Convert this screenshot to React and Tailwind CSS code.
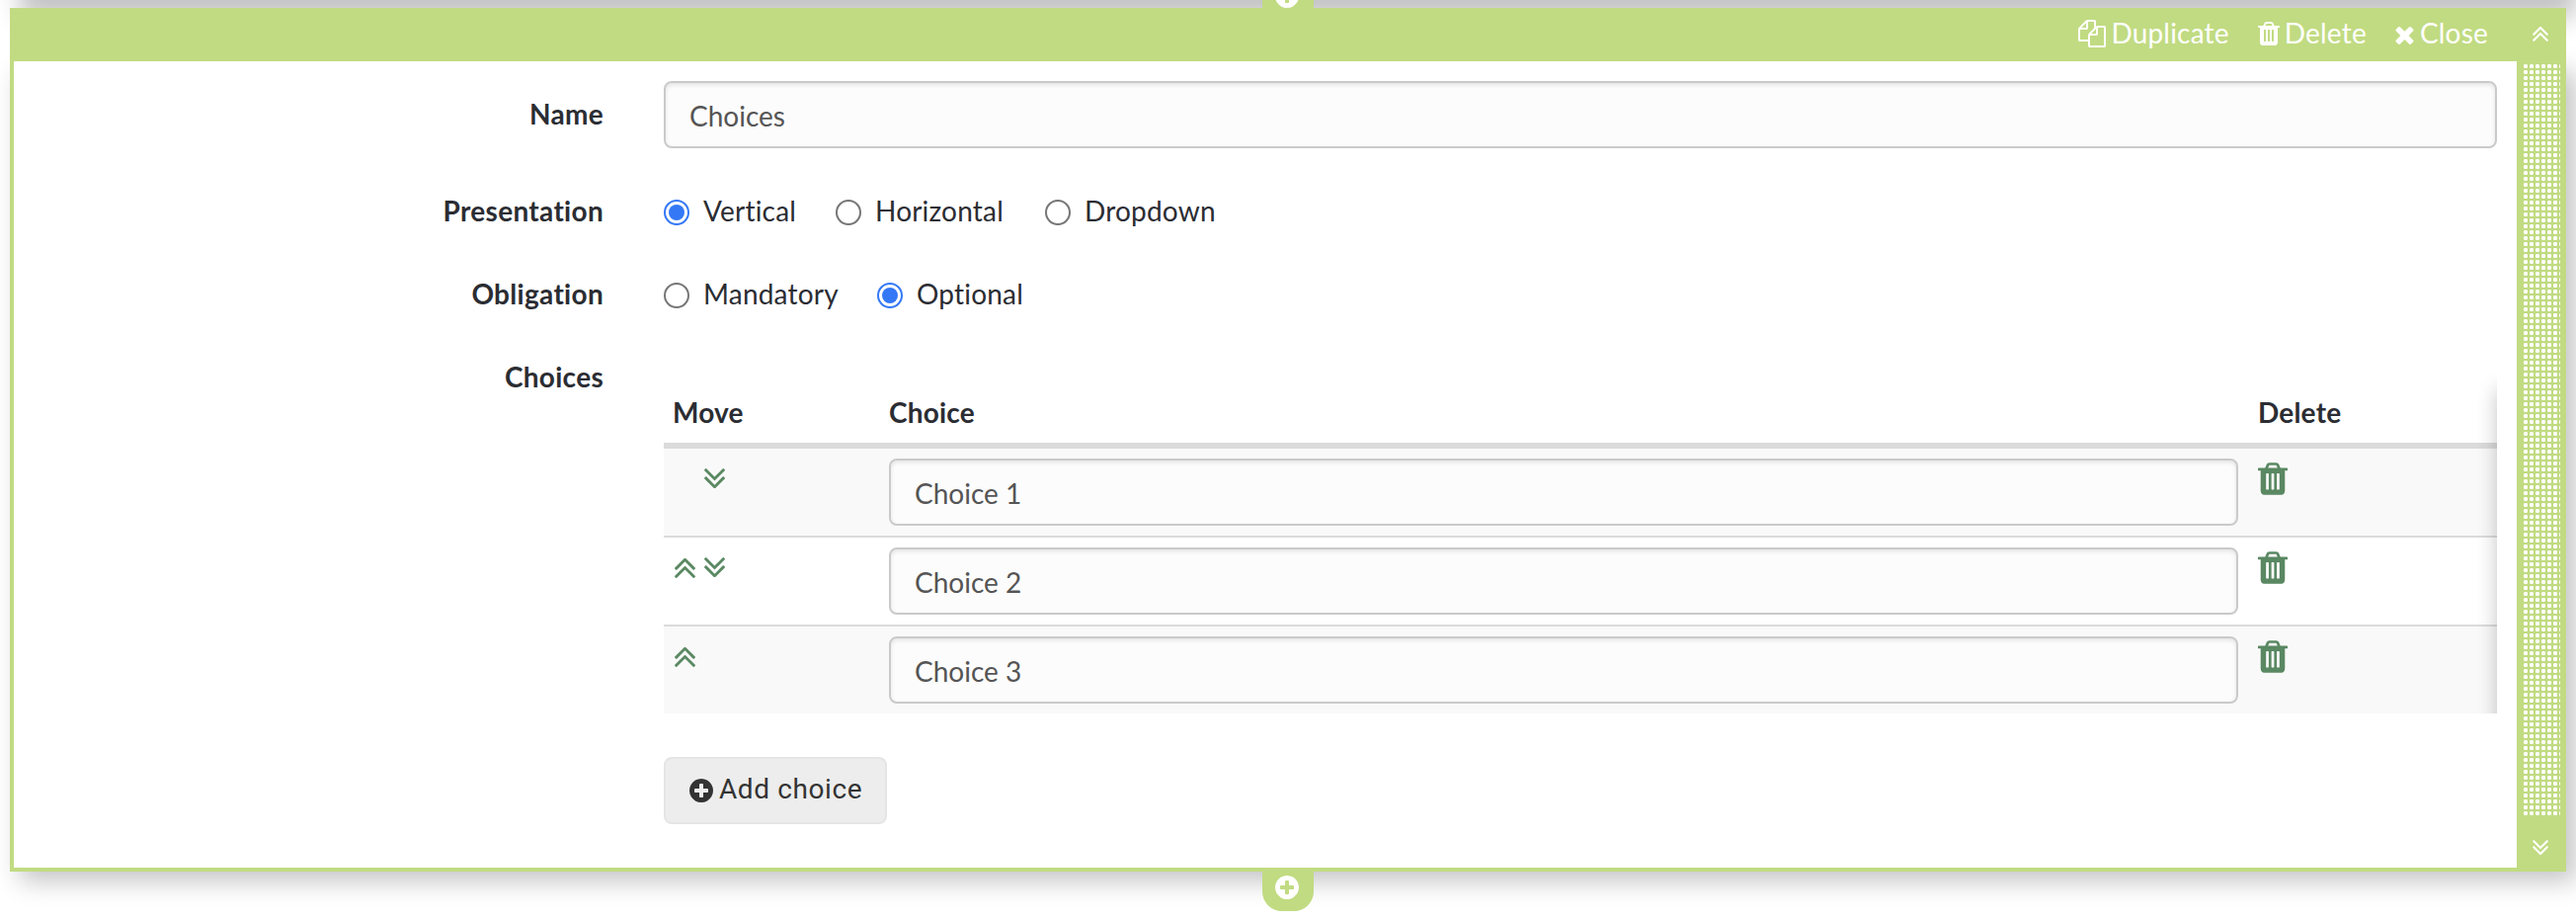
const P = {
  trash: ['0 128 1408 1536', 'M512 1376v-704q0-14-9-23t-23-9h-64q-14 0-23 9t-9 23v704q0 14 9 23t23 9h64q14 0 23-9t9-23zm256 0v-704q0-14-9-23t-23-9h-64q-14 0-23 9t-9 23v704q0 14 9 23t23 9h64q14 0 23-9t9-23zm256 0v-704q0-14-9-23t-23-9h-64q-14 0-23 9t-9 23v704q0 14 9 23t23 9h64q14 0 23-9t9-23zm-544-992h448l-48-117q-7-9-17-11h-317q-10 2-17 11zm928 32v64q0 14-9 23t-23 9h-96v948q0 83-47 143.5t-113 60.5h-832q-66 0-113-58.5t-47-141.5v-952h-96q-14 0-23-9t-9-23v-64q0-14 9-23t23-9h309l70-167q15-37 54-63t79-26h320q40 0 79 26t54 63l70 167h309q14 0 23 9t9 23z'],
  files: ['0 0 1792 1792', 'M1696 384q40 0 68 28t28 68v1216q0 40-28 68t-68 28h-960q-40 0-68-28t-28-68v-288h-544q-40 0-68-28t-28-68v-672q0-40 20-88t48-76l408-408q28-28 76-48t88-20h416q40 0 68 28t28 68v328q68-40 128-40h416zm-544 213l-299 299h299v-299zm-640-384l-299 299h299v-299zm196 647l316-316v-416h-384v416q0 40-28 68t-68 28h-416v640h512v-256q0-40 20-88t48-76zm956 804v-1152h-384v416q0 40-28 68t-68 28h-416v640h896z'],
  times: ['302 302 1188 1252', 'M1490 1322q0 40-28 68l-136 136q-28 28-68 28t-68-28l-294-294-294 294q-28 28-68 28t-68-28l-136-136q-28-28-28-68t28-68l294-294-294-294q-28-28-28-68t28-68l136-136q28-28 68-28t68 28l294 294 294-294q28-28 68-28t68 28l136 136q28 28 28 68t-28 68l-294 294 294 294q28 28 28 68z'],
  plus: ['128 128 1536 1536', 'M1344 960v-128q0-26-19-45t-45-19h-256v-256q0-26-19-45t-45-19h-128q-26 0-45 19t-19 45v256h-256q-26 0-45 19t-19 45v128q0 26 19 45t45 19h256v256q0 26 19 45t45 19h128q26 0 45-19t19-45v-256h256q26 0 45-19t19-45zm320-64q0 209-103 385.5t-279.5 279.5-385.5 103-385.5-103-279.5-279.5-103-385.5 103-385.5 279.5-279.5 385.5-103 385.5 103 279.5 279.5 103 385.5z'],
  up: ['397 452 998 943', 'M1395 1312q0 13-10 23l-50 50q-10 10-23 10t-23-10l-393-393-393 393q-10 10-23 10t-23-10l-50-50q-10-10-10-23t10-23l466-466q10-10 23-10t23 10l466 466q10 10 10 23zm0-384q0 13-10 23l-50 50q-10 10-23 10t-23-10l-393-393-393 393q-10 10-23 10t-23-10l-50-50q-10-10-10-23t10-23l466-466q10-10 23-10t23 10l466 466q10 10 10 23z'],
};

function Icon({ name, className }) {
  const [box, d] = P[name];
  return (
    <svg viewBox={box} className={`shrink-0 fill-current ${className}`} aria-hidden="true">
      <path d={d} />
    </svg>
  );
}

function Field({ label, top, children }) {
  return (
    <div className={`flex ${top}`}>
      <div className="w-[598px] shrink-0 pr-px text-right font-bold leading-[38px] tracking-[0.3px]">{label}</div>
      <div className="ml-[60px] w-[1856px]">{children}</div>
    </div>
  );
}

function TextBox({ value }) {
  return (
    <input
      readOnly
      value={value}
      className="block h-[68px] w-full rounded-[8px] border-2 border-[#cacaca] bg-[#fcfcfc] px-6 pt-px text-[28px] tracking-normal text-[#555] shadow-[inset_0_2px_4px_rgba(10,10,10,0.1)] outline-none"
    />
  );
}

function Radio({ label, checked, width }) {
  return (
    <label className={`flex items-start ${width}`}>
      <span
        className={`mt-2 flex size-[26px] shrink-0 items-center justify-center rounded-full border-2 bg-white ${checked ? 'border-[#3478f6]' : 'border-[#767676]'}`}
      >
        {checked && <span className="size-4 rounded-full bg-[#3478f6]" />}
      </span>
      <span className="ml-[14px] leading-[38px]">{label}</span>
    </label>
  );
}

function ChoiceRow({ value, up, down, className }) {
  return (
    <div className={`flex ${className}`}>
      <div className="flex w-[228px] gap-[9px] pl-[11px] pt-5 text-[#5a8862]">
        <Icon name="up" className={`h-5 w-[21px] mt-px ${up ? '' : 'invisible'}`} />
        <Icon name="up" className={`h-5 w-[21px] rotate-180 ${down ? '' : 'invisible'}`} />
      </div>
      <div className="w-[1366px] pt-[10px]">
        <TextBox value={value} />
      </div>
      <div className="pl-5 pt-[14px] text-[#5a8862]">
        <Icon name="trash" className="h-[33px] w-[30px]" />
      </div>
    </div>
  );
}

export default function App() {
  return (
    <div className="relative h-[932px] w-[2608px] overflow-hidden bg-white font-['Lato',sans-serif] text-[28px] tracking-[0.2px] text-[#2b2d33]">
      <div className="absolute -top-[60px] left-[10px] h-[56px] w-[2588px] shadow-[10px_22px_24px_rgba(0,0,0,0.24)]" />
      <div className="absolute left-[1278px] top-0 z-10 h-2 w-[52px] overflow-hidden bg-[#c1db82]">
        <div className="-mt-4 flex justify-center pr-0.5 text-white">
          <Icon name="plus" className="size-6" />
        </div>
      </div>

      <div className="relative ml-[10px] mt-2 flex h-[874px] w-[2588px] flex-col">
        <div className="relative flex h-[54px] shrink-0 items-start bg-[#c1db82] leading-[42px] text-white">
          <div className="flex flex-1 items-start justify-end pr-[29px] pt-1 tracking-[0.2px]">
            <Icon name="files" className="mt-2 size-[28px]" />
            <span className="ml-[5px]">Duplicate</span>
            <Icon name="trash" className="ml-[29px] mt-[10px] h-6 w-[22px]" />
            <span className="ml-[5px]">Delete</span>
            <Icon name="times" className="ml-[29px] mt-[14px] h-[19px] w-[19px]" />
            <span className="ml-[6px]">Close</span>
          </div>
          <div className="flex w-[50px] justify-center pr-0.5 pt-[19px]">
            <Icon name="up" className="h-[15px] w-4" />
          </div>
        </div>

        <div className="flex min-h-0 flex-1 border-b-4 border-l-4 border-[#c1db82] bg-white shadow-[10px_10px_24px_rgba(0,0,0,0.23)]">
          <div className="w-[2534px]">
            <div className="flex flex-col">
              <Field label="Name" top="pt-5 [&>div:first-child]:pt-[14px]">
                <TextBox value="Choices" />
              </Field>
              <Field label="Presentation" top="mt-[44px] h-[40px]">
                <div className="flex">
                  <Radio label="Vertical" checked width="w-[174px]" />
                  <Radio label="Horizontal" width="w-[212px]" />
                  <Radio label="Dropdown" width="w-[180px]" />
                </div>
              </Field>
              <Field label="Obligation" top="mt-[44px] h-[40px]">
                <div className="flex">
                  <Radio label="Mandatory" width="w-[216px]" />
                  <Radio label="Optional" checked width="w-[180px]" />
                </div>
              </Field>
              <Field label="Choices" top="mt-[44px]">
                <div className="relative mt-[2px] overflow-hidden">
                  <div className="flex h-[90px] border-b-[6px] border-[#dbdbdb] pt-[33px] font-bold leading-[40px]">
                    <span className="w-[228px] pl-[9px]">Move</span>
                    <span className="w-[1366px]">Choice</span>
                    <span className="pl-5">Delete</span>
                  </div>
                  <ChoiceRow value="Choice 1" down className="h-[90px] border-b-2 border-[#dbdbdb] bg-[#f9f9f9]" />
                  <ChoiceRow value="Choice 2" up down className="h-[90px] border-b-2 border-[#dbdbdb]" />
                  <ChoiceRow value="Choice 3" up className="h-[88px] bg-[#f9f9f9]" />
                  <div className="pointer-events-none absolute left-full top-[30px] h-[350px] w-10 shadow-[0_0_20px_rgba(0,0,0,0.24)]" />
                </div>
                <button className="mt-[44px] flex h-[68px] w-[226px] items-center rounded-[8px] border-2 border-[#e5e5e5] bg-[#ededed] pl-6 font-['Roboto',sans-serif] text-[#333]">
                  <Icon name="plus" className="size-6" />
                  <span className="ml-[6px] whitespace-nowrap pb-0.5 tracking-[0.6px]">Add choice</span>
                </button>
              </Field>
            </div>
          </div>
          <div className="flex w-[50px] shrink-0 flex-col bg-[#c1db82] pl-[7px] pt-[3px] text-white">
            <div className="h-[760px] w-[37px] bg-[radial-gradient(circle_at_2px_2px,#fff_2px,transparent_2.3px)] bg-[length:6px_6px]" />
            <div className="flex w-[34px] justify-center pt-[25px]">
              <Icon name="up" className="h-[15px] w-4 rotate-180" />
            </div>
          </div>
        </div>
      </div>

      <div className="relative z-10 ml-[1278px] flex h-10 w-[52px] justify-center rounded-b-[20px] bg-[#c1db82] pr-0.5 pt-1 text-white">
        <Icon name="plus" className="size-6" />
      </div>
    </div>
  );
}
